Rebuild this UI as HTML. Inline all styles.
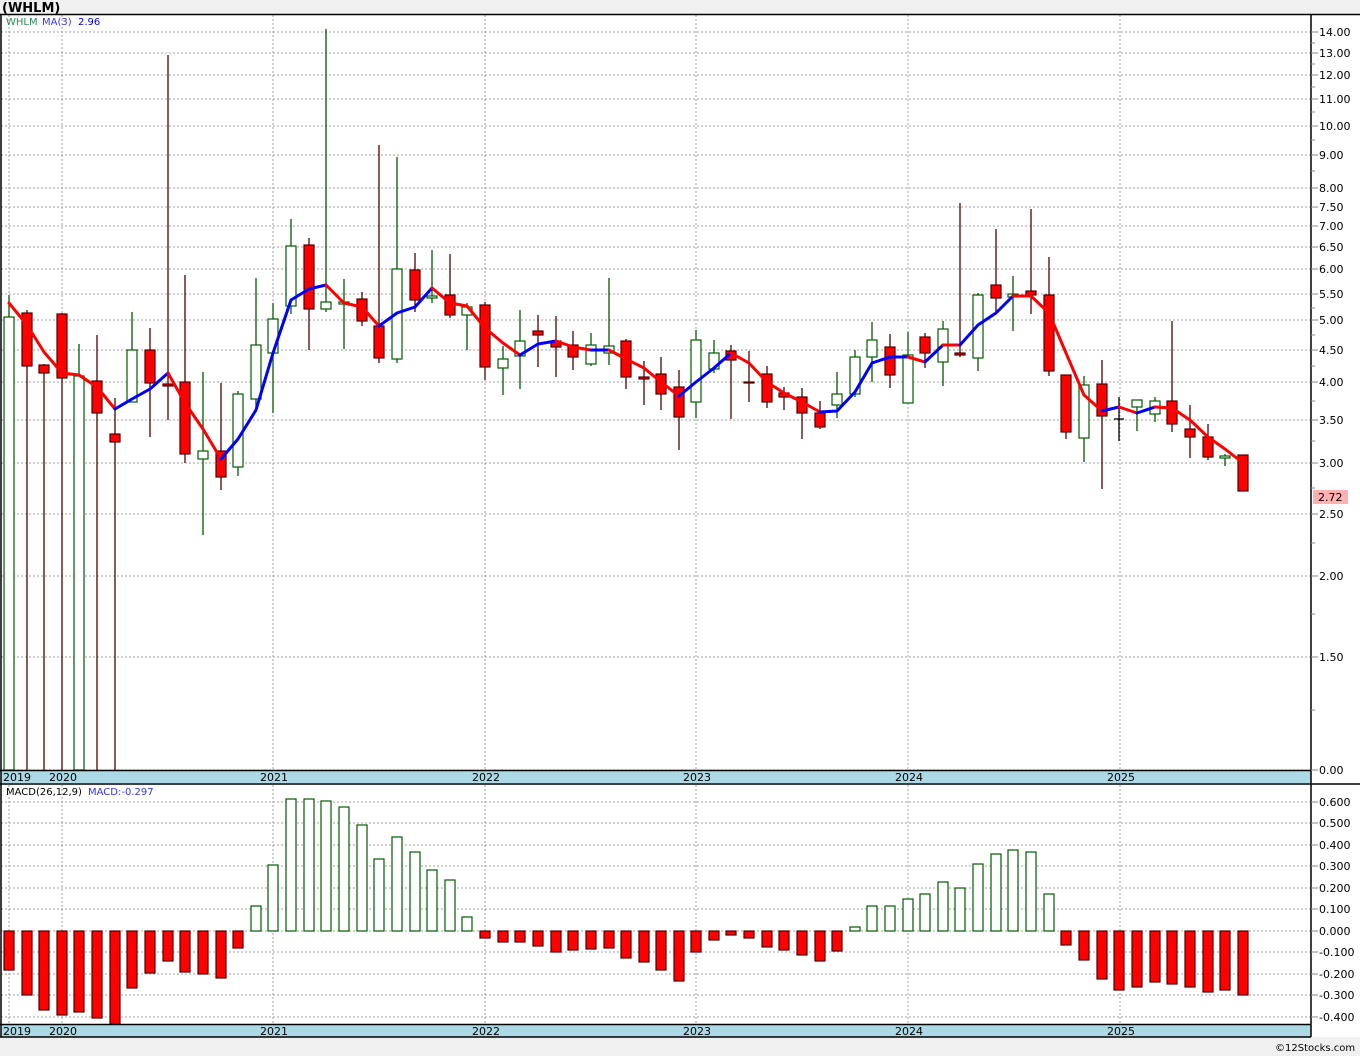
<!DOCTYPE html>
<html><head><meta charset="utf-8"><style>
body{margin:0;background:#f0f0f0;}
svg{display:block;font-family:"DejaVu Sans","Liberation Sans",sans-serif;}
.t{font-size:11px;fill:#000;}
.g{stroke:#a0a0a0;stroke-width:1;stroke-dasharray:2,2;}
.rw{stroke:#500000;stroke-width:1.3;}
.gw{stroke:#005a00;stroke-width:1.3;}
.rb{fill:#ff0000;stroke:#500000;stroke-width:1.2;}
.gb{fill:#fff;stroke:#005a00;stroke-width:1.2;}
</style></head><body>
<svg width="1360" height="1056" viewBox="0 0 1360 1056">
<rect x="0" y="0" width="1360" height="1056" fill="#f0f0f0"/>
<text x="2" y="12" style="font-size:13px;font-weight:bold;font-family:'DejaVu Sans',sans-serif">(WHLM)</text>
<rect x="1" y="14" width="1359" height="1023" fill="#fff"/>
<rect x="1" y="771" width="1310" height="12" fill="#add8e6"/>
<rect x="1" y="1025" width="1310" height="12" fill="#add8e6"/>
<g class="g">
<line x1="9" y1="15" x2="9" y2="770"/><line x1="62" y1="15" x2="62" y2="770"/><line x1="273" y1="15" x2="273" y2="770"/><line x1="485" y1="15" x2="485" y2="770"/><line x1="696" y1="15" x2="696" y2="770"/><line x1="908" y1="15" x2="908" y2="770"/><line x1="1120" y1="15" x2="1120" y2="770"/>
<line x1="9" y1="785" x2="9" y2="1024"/><line x1="62" y1="785" x2="62" y2="1024"/><line x1="273" y1="785" x2="273" y2="1024"/><line x1="485" y1="785" x2="485" y2="1024"/><line x1="696" y1="785" x2="696" y2="1024"/><line x1="908" y1="785" x2="908" y2="1024"/><line x1="1120" y1="785" x2="1120" y2="1024"/>
<line x1="1" y1="32" x2="1311" y2="32"/><line x1="1" y1="53" x2="1311" y2="53"/><line x1="1" y1="75" x2="1311" y2="75"/><line x1="1" y1="99" x2="1311" y2="99"/><line x1="1" y1="126" x2="1311" y2="126"/><line x1="1" y1="155" x2="1311" y2="155"/><line x1="1" y1="188" x2="1311" y2="188"/><line x1="1" y1="207" x2="1311" y2="207"/><line x1="1" y1="226" x2="1311" y2="226"/><line x1="1" y1="247" x2="1311" y2="247"/><line x1="1" y1="269" x2="1311" y2="269"/><line x1="1" y1="294" x2="1311" y2="294"/><line x1="1" y1="320" x2="1311" y2="320"/><line x1="1" y1="350" x2="1311" y2="350"/><line x1="1" y1="382" x2="1311" y2="382"/><line x1="1" y1="420" x2="1311" y2="420"/><line x1="1" y1="463" x2="1311" y2="463"/><line x1="1" y1="514" x2="1311" y2="514"/><line x1="1" y1="576" x2="1311" y2="576"/><line x1="1" y1="657" x2="1311" y2="657"/><line x1="1" y1="770" x2="1311" y2="770"/>
<line x1="1" y1="802" x2="1311" y2="802"/><line x1="1" y1="823" x2="1311" y2="823"/><line x1="1" y1="845" x2="1311" y2="845"/><line x1="1" y1="866" x2="1311" y2="866"/><line x1="1" y1="888" x2="1311" y2="888"/><line x1="1" y1="909" x2="1311" y2="909"/><line x1="1" y1="931" x2="1311" y2="931"/><line x1="1" y1="952" x2="1311" y2="952"/><line x1="1" y1="974" x2="1311" y2="974"/><line x1="1" y1="995" x2="1311" y2="995"/><line x1="1" y1="1017" x2="1311" y2="1017"/>
</g>
<g>
<line class="gw" x1="9" y1="295" x2="9" y2="770"/><rect class="gb" x="4" y="317" width="10" height="453"/>
<line class="rw" x1="27" y1="310" x2="27" y2="770"/><rect class="rb" x="22" y="313" width="10" height="53"/>
<line class="rw" x1="44" y1="364" x2="44" y2="770"/><rect class="rb" x="39" y="365" width="10" height="8"/>
<line class="rw" x1="62" y1="313" x2="62" y2="770"/><rect class="rb" x="57" y="314" width="10" height="64"/>
<line class="gw" x1="79" y1="344" x2="79" y2="770"/><rect class="gb" x="74" y="376" width="10" height="394"/>
<line class="rw" x1="97" y1="335" x2="97" y2="770"/><rect class="rb" x="92" y="381" width="10" height="32"/>
<line class="rw" x1="115" y1="398" x2="115" y2="770"/><rect class="rb" x="110" y="434" width="10" height="8"/>
<line class="gw" x1="132" y1="312" x2="132" y2="402"/><rect class="gb" x="127" y="350" width="10" height="52"/>
<line class="rw" x1="150" y1="328" x2="150" y2="437"/><rect class="rb" x="145" y="350" width="10" height="33"/>
<line class="rw" x1="168" y1="55" x2="168" y2="420"/><rect class="rb" x="163" y="384" width="10" height="2"/>
<line class="rw" x1="185" y1="275" x2="185" y2="463"/><rect class="rb" x="180" y="382" width="10" height="72"/>
<line class="gw" x1="203" y1="372" x2="203" y2="535"/><rect class="gb" x="198" y="451" width="10" height="8"/>
<line class="rw" x1="221" y1="383" x2="221" y2="490"/><rect class="rb" x="216" y="451" width="10" height="26"/>
<line class="gw" x1="238" y1="391" x2="238" y2="476"/><rect class="gb" x="233" y="394" width="10" height="73"/>
<line class="gw" x1="256" y1="278" x2="256" y2="412"/><rect class="gb" x="251" y="345" width="10" height="54"/>
<line class="gw" x1="273" y1="303" x2="273" y2="413"/><rect class="gb" x="268" y="319" width="10" height="34"/>
<line class="gw" x1="291" y1="219" x2="291" y2="314"/><rect class="gb" x="286" y="246" width="10" height="60"/>
<line class="rw" x1="309" y1="238" x2="309" y2="350"/><rect class="rb" x="304" y="245" width="10" height="64"/>
<line class="gw" x1="326" y1="29" x2="326" y2="312"/><rect class="gb" x="321" y="302" width="10" height="7"/>
<line class="gw" x1="344" y1="279" x2="344" y2="349"/><rect class="gb" x="339" y="302" width="10" height="2"/>
<line class="rw" x1="362" y1="292" x2="362" y2="326"/><rect class="rb" x="357" y="299" width="10" height="22"/>
<line class="rw" x1="379" y1="145" x2="379" y2="363"/><rect class="rb" x="374" y="326" width="10" height="32"/>
<line class="gw" x1="397" y1="157" x2="397" y2="363"/><rect class="gb" x="392" y="269" width="10" height="90"/>
<line class="rw" x1="415" y1="253" x2="415" y2="312"/><rect class="rb" x="410" y="270" width="10" height="30"/>
<line class="gw" x1="432" y1="250" x2="432" y2="303"/><rect class="gb" x="427" y="296" width="10" height="2"/>
<line class="rw" x1="450" y1="254" x2="450" y2="318"/><rect class="rb" x="445" y="295" width="10" height="20"/>
<line class="gw" x1="467" y1="303" x2="467" y2="350"/><rect class="gb" x="462" y="307" width="10" height="8"/>
<line class="rw" x1="485" y1="302" x2="485" y2="380"/><rect class="rb" x="480" y="305" width="10" height="62"/>
<line class="gw" x1="503" y1="346" x2="503" y2="395"/><rect class="gb" x="498" y="359" width="10" height="9"/>
<line class="gw" x1="520" y1="310" x2="520" y2="389"/><rect class="gb" x="515" y="341" width="10" height="15"/>
<line class="rw" x1="538" y1="315" x2="538" y2="367"/><rect class="rb" x="533" y="331" width="10" height="4"/>
<line class="rw" x1="556" y1="316" x2="556" y2="377"/><rect class="rb" x="551" y="341" width="10" height="6"/>
<line class="rw" x1="573" y1="331" x2="573" y2="370"/><rect class="rb" x="568" y="345" width="10" height="12"/>
<line class="gw" x1="591" y1="333" x2="591" y2="366"/><rect class="gb" x="586" y="345" width="10" height="19"/>
<line class="gw" x1="609" y1="278" x2="609" y2="365"/><rect class="gb" x="604" y="346" width="10" height="7"/>
<line class="rw" x1="626" y1="339" x2="626" y2="389"/><rect class="rb" x="621" y="341" width="10" height="36"/>
<line class="rw" x1="644" y1="361" x2="644" y2="405"/><rect class="rb" x="639" y="377" width="10" height="2"/>
<line class="rw" x1="661" y1="357" x2="661" y2="410"/><rect class="rb" x="656" y="374" width="10" height="20"/>
<line class="rw" x1="679" y1="370" x2="679" y2="450"/><rect class="rb" x="674" y="387" width="10" height="30"/>
<line class="gw" x1="696" y1="330" x2="696" y2="418"/><rect class="gb" x="691" y="340" width="10" height="62"/>
<line class="gw" x1="714" y1="340" x2="714" y2="373"/><rect class="gb" x="709" y="353" width="10" height="16"/>
<line class="rw" x1="731" y1="345" x2="731" y2="419"/><rect class="rb" x="726" y="351" width="10" height="9"/>
<line class="rw" x1="749" y1="351" x2="749" y2="402"/><rect class="rb" x="744" y="382" width="10" height="1"/>
<line class="rw" x1="767" y1="366" x2="767" y2="408"/><rect class="rb" x="762" y="374" width="10" height="28"/>
<line class="rw" x1="784" y1="387" x2="784" y2="410"/><rect class="rb" x="779" y="393" width="10" height="4"/>
<line class="rw" x1="802" y1="388" x2="802" y2="439"/><rect class="rb" x="797" y="397" width="10" height="16"/>
<line class="rw" x1="820" y1="401" x2="820" y2="429"/><rect class="rb" x="815" y="413" width="10" height="14"/>
<line class="gw" x1="837" y1="372" x2="837" y2="418"/><rect class="gb" x="832" y="394" width="10" height="11"/>
<line class="gw" x1="855" y1="350" x2="855" y2="397"/><rect class="gb" x="850" y="357" width="10" height="37"/>
<line class="gw" x1="872" y1="322" x2="872" y2="382"/><rect class="gb" x="867" y="340" width="10" height="17"/>
<line class="rw" x1="890" y1="334" x2="890" y2="388"/><rect class="rb" x="885" y="347" width="10" height="28"/>
<line class="gw" x1="908" y1="332" x2="908" y2="403"/><rect class="gb" x="903" y="355" width="10" height="48"/>
<line class="rw" x1="925" y1="333" x2="925" y2="368"/><rect class="rb" x="920" y="337" width="10" height="16"/>
<line class="gw" x1="943" y1="321" x2="943" y2="386"/><rect class="gb" x="938" y="329" width="10" height="33"/>
<line class="rw" x1="960" y1="203" x2="960" y2="357"/><rect class="rb" x="955" y="353" width="10" height="2"/>
<line class="gw" x1="978" y1="293" x2="978" y2="371"/><rect class="gb" x="973" y="295" width="10" height="63"/>
<line class="rw" x1="996" y1="229" x2="996" y2="313"/><rect class="rb" x="991" y="285" width="10" height="13"/>
<line class="gw" x1="1013" y1="276" x2="1013" y2="331"/><rect class="gb" x="1008" y="294" width="10" height="3"/>
<line class="rw" x1="1031" y1="209" x2="1031" y2="314"/><rect class="rb" x="1026" y="291" width="10" height="4"/>
<line class="rw" x1="1049" y1="257" x2="1049" y2="376"/><rect class="rb" x="1044" y="295" width="10" height="76"/>
<line class="rw" x1="1066" y1="375" x2="1066" y2="439"/><rect class="rb" x="1061" y="375" width="10" height="57"/>
<line class="gw" x1="1084" y1="376" x2="1084" y2="462"/><rect class="gb" x="1079" y="385" width="10" height="53"/>
<line class="rw" x1="1102" y1="360" x2="1102" y2="489"/><rect class="rb" x="1097" y="384" width="10" height="32"/>
<line stroke="#000" stroke-width="1.3" x1="1119" y1="397" x2="1119" y2="441"/><line stroke="#000" stroke-width="1.3" x1="1114" y1="419" x2="1124" y2="419"/>
<line class="gw" x1="1137" y1="400" x2="1137" y2="431"/><rect class="gb" x="1132" y="400" width="10" height="7"/>
<line class="gw" x1="1155" y1="397" x2="1155" y2="422"/><rect class="gb" x="1150" y="401" width="10" height="13"/>
<line class="rw" x1="1172" y1="321" x2="1172" y2="432"/><rect class="rb" x="1167" y="401" width="10" height="23"/>
<line class="rw" x1="1190" y1="405" x2="1190" y2="458"/><rect class="rb" x="1185" y="429" width="10" height="8"/>
<line class="rw" x1="1208" y1="424" x2="1208" y2="460"/><rect class="rb" x="1203" y="437" width="10" height="20"/>
<line class="gw" x1="1225" y1="454" x2="1225" y2="466"/><rect class="gb" x="1220" y="456" width="10" height="2"/>
<rect class="rb" x="1238" y="455" width="10" height="36"/>
</g>
<g fill="none" stroke-width="3" stroke-linejoin="round" stroke-linecap="round">
<polyline stroke="#ff0000" points="9,303 27,325 44,352 62,373 79,375 97,387 115,409"/>
<polyline stroke="#0000ff" points="115,409 132,399 150,389 168,373"/>
<polyline stroke="#ff0000" points="168,373 185,403 203,429 221,459"/>
<polyline stroke="#0000ff" points="221,459 238,439 256,410 273,353 291,300 309,289 326,285"/>
<polyline stroke="#ff0000" points="326,285 344,303 362,307 379,326"/>
<polyline stroke="#0000ff" points="379,326 397,313 415,307 432,288"/>
<polyline stroke="#ff0000" points="432,288 450,303 467,306 485,328 503,343 520,355"/>
<polyline stroke="#0000ff" points="520,355 538,344 556,341"/>
<polyline stroke="#ff0000" points="556,341 573,347 591,350"/>
<polyline stroke="#0000ff" points="591,350 609,350"/>
<polyline stroke="#ff0000" points="609,350 626,359 644,368 661,382 679,396"/>
<polyline stroke="#0000ff" points="679,396 696,382 714,368 731,353"/>
<polyline stroke="#ff0000" points="731,353 749,363 767,382 784,393 802,402 820,412"/>
<polyline stroke="#0000ff" points="820,412 837,411 855,392 872,363 890,357 908,357"/>
<polyline stroke="#ff0000" points="908,357 925,362"/>
<polyline stroke="#0000ff" points="925,362 943,345"/>
<polyline stroke="#ff0000" points="943,345 960,345"/>
<polyline stroke="#0000ff" points="960,345 978,325 996,313 1013,296"/>
<polyline stroke="#ff0000" points="1013,296 1031,296 1049,313 1066,353 1084,395 1102,411"/>
<polyline stroke="#0000ff" points="1102,411 1119,407"/>
<polyline stroke="#ff0000" points="1119,407 1137,413"/>
<polyline stroke="#0000ff" points="1137,413 1155,407"/>
<polyline stroke="#ff0000" points="1155,407 1172,408 1190,420 1208,437 1225,449 1243,463"/>
</g>
<g>
<rect class="rb" x="4" y="931" width="10" height="39"/>
<rect class="rb" x="22" y="931" width="10" height="64"/>
<rect class="rb" x="39" y="931" width="10" height="79"/>
<rect class="rb" x="57" y="931" width="10" height="84"/>
<rect class="rb" x="74" y="931" width="10" height="81"/>
<rect class="rb" x="92" y="931" width="10" height="87"/>
<rect class="rb" x="110" y="931" width="10" height="93"/>
<rect class="rb" x="127" y="931" width="10" height="57"/>
<rect class="rb" x="145" y="931" width="10" height="42"/>
<rect class="rb" x="163" y="931" width="10" height="30"/>
<rect class="rb" x="180" y="931" width="10" height="41"/>
<rect class="rb" x="198" y="931" width="10" height="43"/>
<rect class="rb" x="216" y="931" width="10" height="47"/>
<rect class="rb" x="233" y="931" width="10" height="17"/>
<rect class="gb" x="251" y="906" width="10" height="25"/>
<rect class="gb" x="268" y="865" width="10" height="66"/>
<rect class="gb" x="286" y="799" width="10" height="132"/>
<rect class="gb" x="304" y="799" width="10" height="132"/>
<rect class="gb" x="321" y="801" width="10" height="130"/>
<rect class="gb" x="339" y="807" width="10" height="124"/>
<rect class="gb" x="357" y="825" width="10" height="106"/>
<rect class="gb" x="374" y="859" width="10" height="72"/>
<rect class="gb" x="392" y="837" width="10" height="94"/>
<rect class="gb" x="410" y="852" width="10" height="79"/>
<rect class="gb" x="427" y="870" width="10" height="61"/>
<rect class="gb" x="445" y="880" width="10" height="51"/>
<rect class="gb" x="462" y="917" width="10" height="14"/>
<rect class="rb" x="480" y="931" width="10" height="7"/>
<rect class="rb" x="498" y="931" width="10" height="11"/>
<rect class="rb" x="515" y="931" width="10" height="11"/>
<rect class="rb" x="533" y="931" width="10" height="15"/>
<rect class="rb" x="551" y="931" width="10" height="21"/>
<rect class="rb" x="568" y="931" width="10" height="19"/>
<rect class="rb" x="586" y="931" width="10" height="18"/>
<rect class="rb" x="604" y="931" width="10" height="17"/>
<rect class="rb" x="621" y="931" width="10" height="27"/>
<rect class="rb" x="639" y="931" width="10" height="31"/>
<rect class="rb" x="656" y="931" width="10" height="39"/>
<rect class="rb" x="674" y="931" width="10" height="50"/>
<rect class="rb" x="691" y="931" width="10" height="21"/>
<rect class="rb" x="709" y="931" width="10" height="9"/>
<rect class="rb" x="726" y="931" width="10" height="4"/>
<rect class="rb" x="744" y="931" width="10" height="7"/>
<rect class="rb" x="762" y="931" width="10" height="16"/>
<rect class="rb" x="779" y="931" width="10" height="19"/>
<rect class="rb" x="797" y="931" width="10" height="24"/>
<rect class="rb" x="815" y="931" width="10" height="30"/>
<rect class="rb" x="832" y="931" width="10" height="20"/>
<rect class="gb" x="850" y="927" width="10" height="4"/>
<rect class="gb" x="867" y="906" width="10" height="25"/>
<rect class="gb" x="885" y="906" width="10" height="25"/>
<rect class="gb" x="903" y="899" width="10" height="32"/>
<rect class="gb" x="920" y="894" width="10" height="37"/>
<rect class="gb" x="938" y="882" width="10" height="49"/>
<rect class="gb" x="955" y="888" width="10" height="43"/>
<rect class="gb" x="973" y="864" width="10" height="67"/>
<rect class="gb" x="991" y="854" width="10" height="77"/>
<rect class="gb" x="1008" y="850" width="10" height="81"/>
<rect class="gb" x="1026" y="852" width="10" height="79"/>
<rect class="gb" x="1044" y="894" width="10" height="37"/>
<rect class="rb" x="1061" y="931" width="10" height="14"/>
<rect class="rb" x="1079" y="931" width="10" height="29"/>
<rect class="rb" x="1097" y="931" width="10" height="48"/>
<rect class="rb" x="1114" y="931" width="10" height="59"/>
<rect class="rb" x="1132" y="931" width="10" height="56"/>
<rect class="rb" x="1150" y="931" width="10" height="51"/>
<rect class="rb" x="1167" y="931" width="10" height="53"/>
<rect class="rb" x="1185" y="931" width="10" height="56"/>
<rect class="rb" x="1203" y="931" width="10" height="61"/>
<rect class="rb" x="1220" y="931" width="10" height="59"/>
<rect class="rb" x="1238" y="931" width="10" height="64"/>
</g>
<g stroke="#000" stroke-width="1.5" fill="none">
<line x1="0" y1="14.5" x2="1360" y2="14.5"/>
<line x1="1" y1="14" x2="1" y2="1037"/>
<line x1="1311" y1="14" x2="1311" y2="1037"/>
<line x1="0" y1="770.5" x2="1311" y2="770.5"/>
<line x1="0" y1="784" x2="1360" y2="784"/>
<line x1="0" y1="1024.5" x2="1311" y2="1024.5"/>
<line x1="0" y1="1037" x2="1311" y2="1037"/>
</g>
<g stroke="#888" stroke-width="1">
<line x1="1311" y1="32" x2="1318" y2="32"/><line x1="1311" y1="53" x2="1318" y2="53"/><line x1="1311" y1="75" x2="1318" y2="75"/><line x1="1311" y1="99" x2="1318" y2="99"/><line x1="1311" y1="126" x2="1318" y2="126"/><line x1="1311" y1="155" x2="1318" y2="155"/><line x1="1311" y1="188" x2="1318" y2="188"/><line x1="1311" y1="207" x2="1318" y2="207"/><line x1="1311" y1="226" x2="1318" y2="226"/><line x1="1311" y1="247" x2="1318" y2="247"/><line x1="1311" y1="269" x2="1318" y2="269"/><line x1="1311" y1="294" x2="1318" y2="294"/><line x1="1311" y1="320" x2="1318" y2="320"/><line x1="1311" y1="350" x2="1318" y2="350"/><line x1="1311" y1="382" x2="1318" y2="382"/><line x1="1311" y1="420" x2="1318" y2="420"/><line x1="1311" y1="463" x2="1318" y2="463"/><line x1="1311" y1="514" x2="1318" y2="514"/><line x1="1311" y1="576" x2="1318" y2="576"/><line x1="1311" y1="657" x2="1318" y2="657"/><line x1="1311" y1="770" x2="1318" y2="770"/>
<line x1="1311" y1="802" x2="1318" y2="802"/><line x1="1311" y1="823" x2="1318" y2="823"/><line x1="1311" y1="845" x2="1318" y2="845"/><line x1="1311" y1="866" x2="1318" y2="866"/><line x1="1311" y1="888" x2="1318" y2="888"/><line x1="1311" y1="909" x2="1318" y2="909"/><line x1="1311" y1="931" x2="1318" y2="931"/><line x1="1311" y1="952" x2="1318" y2="952"/><line x1="1311" y1="974" x2="1318" y2="974"/><line x1="1311" y1="995" x2="1318" y2="995"/><line x1="1311" y1="1017" x2="1318" y2="1017"/>
<line x1="1311" y1="43" x2="1315" y2="43"/><line x1="1311" y1="64" x2="1315" y2="64"/><line x1="1311" y1="87" x2="1315" y2="87"/><line x1="1311" y1="112" x2="1315" y2="112"/><line x1="1311" y1="140" x2="1315" y2="140"/><line x1="1311" y1="171" x2="1315" y2="171"/><line x1="1311" y1="308" x2="1315" y2="308"/><line x1="1311" y1="335" x2="1315" y2="335"/><line x1="1311" y1="366" x2="1315" y2="366"/><line x1="1311" y1="401" x2="1315" y2="401"/><line x1="1311" y1="441" x2="1315" y2="441"/><line x1="1311" y1="488" x2="1315" y2="488"/><line x1="1311" y1="543" x2="1315" y2="543"/><line x1="1311" y1="614" x2="1315" y2="614"/><line x1="1311" y1="710" x2="1315" y2="710"/>
</g>
<g class="t">
<text x="1319" y="36">14.00</text><text x="1319" y="57">13.00</text><text x="1319" y="79">12.00</text><text x="1319" y="103">11.00</text><text x="1319" y="130">10.00</text><text x="1319" y="159">9.00</text><text x="1319" y="192">8.00</text><text x="1319" y="211">7.50</text><text x="1319" y="230">7.00</text><text x="1319" y="251">6.50</text><text x="1319" y="273">6.00</text><text x="1319" y="298">5.50</text><text x="1319" y="324">5.00</text><text x="1319" y="354">4.50</text><text x="1319" y="386">4.00</text><text x="1319" y="424">3.50</text><text x="1319" y="467">3.00</text><text x="1319" y="518">2.50</text><text x="1319" y="580">2.00</text><text x="1319" y="661">1.50</text><text x="1319" y="774">0.00</text>
<text x="1319" y="806">0.600</text><text x="1319" y="827">0.500</text><text x="1319" y="849">0.400</text><text x="1319" y="870">0.300</text><text x="1319" y="892">0.200</text><text x="1319" y="913">0.100</text><text x="1319" y="935">0.000</text><text x="1319" y="956">-0.100</text><text x="1319" y="978">-0.200</text><text x="1319" y="999">-0.300</text><text x="1319" y="1021">-0.400</text>
</g>
<rect x="1313" y="490" width="35" height="14" fill="#ffb0b0"/>
<text class="t" x="1318" y="501">2.72</text>
<g class="t">
<text x="3" y="781">2019</text><text x="49" y="781">2020</text><text x="260" y="781">2021</text><text x="472" y="781">2022</text><text x="683" y="781">2023</text><text x="895" y="781">2024</text><text x="1107" y="781">2025</text>
<text x="3" y="1035">2019</text><text x="49" y="1035">2020</text><text x="260" y="1035">2021</text><text x="472" y="1035">2022</text><text x="683" y="1035">2023</text><text x="895" y="1035">2024</text><text x="1107" y="1035">2025</text>
</g>
<text x="6" y="25" style="font-size:10px;fill:#2e8b57">WHLM</text>
<text x="42" y="25" style="font-size:10px;fill:#3333ff">MA(3)</text>
<text x="78" y="25" style="font-size:10px;fill:#0000ff">2.96</text>
<text x="6" y="795" style="font-size:10px;fill:#000">MACD(26,12,9)</text>
<text x="88" y="795" style="font-size:10px;fill:#3333ff">MACD:-0.297</text>
<text x="1275" y="1051" style="font-size:10px;fill:#000">©12Stocks.com</text>
</svg>
</body></html>
